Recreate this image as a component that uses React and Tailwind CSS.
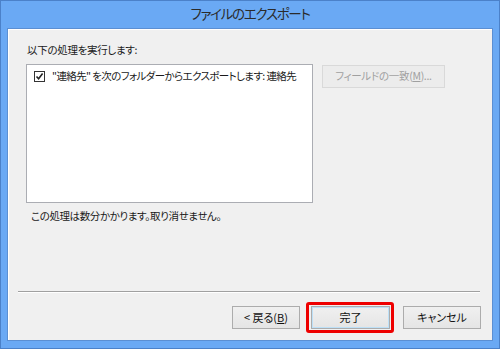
import React from "react";

const font = "[font-family:'Noto_Sans_CJK_JP','Noto_Sans',sans-serif] [font-feature-settings:'palt']";

function Btn({ children, className = "", w }) {
  return (
    <div
      className={`flex items-center justify-center h-[23px] border border-[#acacac] bg-gradient-to-b from-[#f0f0f0] to-[#e5e5e5] text-[11px] leading-none text-[#111] ${className}`}
      style={{ width: w }}
    >
      {children}
    </div>
  );
}

export default function App() {
  return (
    <div className={`w-[500px] h-[349px] border border-[#4b81c9] bg-[#6aa9f4] flex flex-col ${font}`}>
      <div className="h-[27px] flex items-center justify-center text-[13.5px] tracking-[-1.3px] text-[#2b2b2b] leading-none pb-[2px]">
        ファイルのエクスポート
      </div>
      <div className="flex-1 mx-[6px] mb-[7px] border border-[#5b8fd3] bg-[#f0f0f0] flex flex-col shadow-[inset_1px_1px_0_#ffffff]">
        <div className="pl-[18px] pt-[13px]">
          <div className="h-[16px] flex items-center text-[10.5px] tracking-[-0.3px] text-[#1a1a1a] leading-none pl-[1px]">
            以下の処理を実行します:
          </div>
          <div className="mt-[6px] flex items-start">
            <div className="w-[287px] h-[139px] border border-[#abadb3] bg-white pl-[6px] pt-[3px]">
              <div className="flex items-center h-[16px] text-[10.5px] tracking-[-0.6px] text-[#1a1a1a] leading-none whitespace-nowrap">
                <div className="w-[11px] h-[11px] border border-[#333] bg-white flex items-center justify-center mr-[7px] ml-[1px] shrink-0">
                  <svg width="9" height="9" viewBox="0 0 9 9">
                    <path d="M1.5 4.5 L3.6 6.8 L7.6 1.6" fill="none" stroke="#222" strokeWidth="1.6" />
                  </svg>
                </div>
                <span>"連絡先" を次のフォルダーからエクスポートします: 連絡先</span>
              </div>
            </div>
            <div className="ml-[9px] mt-[1px] w-[123px] h-[23px] border border-[#d9d9d9] bg-[#ececec] flex items-center justify-center text-[10.5px] tracking-[-0.3px] text-[#a0a0a0] leading-none">
              フィールドの一致(<span className="underline">M</span>)...
            </div>
          </div>
          <div className="mt-[5px] h-[16px] flex items-center text-[10.5px] tracking-[-0.4px] text-[#1a1a1a] leading-none pl-[5px]">
            この処理は数分かかります。取り消せません。
          </div>
        </div>
        <div className="ml-[10px] mt-[67px] w-[462px] h-[2px] border-t border-[#a0a0a0] bg-white" />
        <div className="mt-[13px] flex justify-end pr-[11px]">
          <Btn w={68}>
            &lt;&nbsp;戻る(<span className="underline">B</span>)
          </Btn>
          <div className="relative ml-[11px]">
            <Btn w={79} className="border-[#3c7fb1] shadow-[inset_0_0_0_1px_#bde0f7]">完了</Btn>
            <div className="absolute -left-[5px] -right-[4px] -top-[4px] -bottom-[4px] border-[3px] border-[#ee0000] rounded-[3px]" />
          </div>
          <Btn w={78} className="ml-[13px]">キャンセル</Btn>
        </div>
      </div>
    </div>
  );
}
